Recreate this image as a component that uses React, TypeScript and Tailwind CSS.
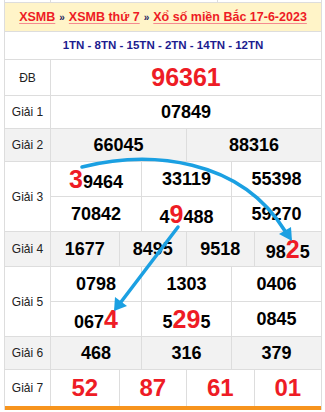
import React from 'react';

const RED = 'text-[#ee1c25]';

type Part = string | { hi: string };

const Num: React.FC<{ parts: Part[] }> = ({ parts }) => (
    <span className="font-bold text-[18px] text-black leading-none">
        {parts.map((p, i) =>
            typeof p === 'string' ? (
                <span key={i}>{p}</span>
            ) : (
                <span key={i} className={`text-[25px] ${RED}`}>{p.hi}</span>
            )
        )}
    </span>
);

const Row: React.FC<{ label: string; gray?: boolean; children: React.ReactNode }> = ({ label, gray, children }) => (
    <div className={`flex border-b border-[#ddd] ${gray ? 'bg-[#f2f2f2]' : 'bg-white'}`}>
        <div className="w-[46px] shrink-0 border-r border-[#ddd] flex items-center justify-center text-[12px] text-[#222]">
            {label}
        </div>
        <div className="flex-1 flex flex-col">{children}</div>
    </div>
);

const Cells: React.FC<{ cols: 1 | 2 | 3 | 4; items: Part[][]; h: string; last?: boolean }> = ({ cols, items, h, last = true }) => {
    const grid = cols === 1 ? 'grid-cols-1' : cols === 2 ? 'grid-cols-2' : cols === 3 ? 'grid-cols-3' : 'grid-cols-4';
    return (
        <div className={`grid ${grid} ${h} ${last ? '' : 'border-b border-[#ddd]'}`}>
            {items.map((parts, i) => (
                <div key={i} className={`flex items-center justify-center ${i > 0 ? 'border-l border-[#ddd]' : ''}`}>
                    <Num parts={parts} />
                </div>
            ))}
        </div>
    );
};

const RedCells: React.FC<{ items: string[] }> = ({ items }) => (
    <div className="grid grid-cols-4 h-[36px]">
        {items.map((n, i) => (
            <div key={i} className={`flex items-center justify-center font-bold text-[24px] ${RED} ${i > 0 ? 'border-l border-[#ddd]' : ''}`}>
                {n}
            </div>
        ))}
    </div>
);

export default function App() {
    return (
        <div className="relative w-[325px] h-[412px] bg-white overflow-hidden" style={{ fontFamily: '"Liberation Sans", Arial, sans-serif' }}>
            <div className="ml-[4px] w-[318px] border-x border-[#ddd]">
                {/* tail of the previous table */}
                <div className="flex h-[3px] border-b border-[#ddd]">
                    <div className="w-[46px] border-r border-[#ddd]" />
                    <div className="w-[167px] border-r border-[#ddd]" />
                </div>

                {/* breadcrumb */}
                <div className="h-[29px] bg-[#fff4c8] flex items-center justify-center text-[12.5px] font-bold whitespace-nowrap border-b border-[#ddd]">
                    <span className={`${RED} underline decoration-[#f58a8f] underline-offset-2`}>XSMB</span>
                    <span className="text-[#1b1b5e] text-[10px] mx-[4px]">»</span>
                    <span className={`${RED} underline decoration-[#f58a8f] underline-offset-2`}>XSMB thứ 7</span>
                    <span className="text-[#1b1b5e] text-[10px] mx-[4px]">»</span>
                    <span className={`${RED} underline decoration-[#f58a8f] underline-offset-2`}>Xổ số miền Bắc 17-6-2023</span>
                </div>

                {/* codes */}
                <div className="h-[28px] flex items-center justify-center text-[11.5px] font-bold text-[#1c1c8f] border-b border-[#ddd]">
                    1TN - 8TN - 15TN - 2TN - 14TN - 12TN
                </div>

                <Row label="ĐB">
                    <div className={`h-[35px] flex items-center justify-center font-bold text-[25px] ${RED}`}>96361</div>
                </Row>
                <Row label="Giải 1">
                    <Cells cols={1} h="h-[32px]" items={[['07849']]} />
                </Row>
                <Row label="Giải 2" gray>
                    <Cells cols={2} h="h-[32px]" items={[['66045'], ['88316']]} />
                </Row>
                <Row label="Giải 3">
                    <Cells cols={3} h="h-[35px]" last={false} items={[[{ hi: '3' }, '9464'], ['33119'], ['55398']]} />
                    <Cells cols={3} h="h-[34px]" items={[['70842'], ['4', { hi: '9' }, '488'], ['59270']]} />
                </Row>
                <Row label="Giải 4" gray>
                    <Cells cols={4} h="h-[34px]" items={[['1677'], ['8495'], ['9518'], ['98', { hi: '2' }, '5']]} />
                </Row>
                <Row label="Giải 5">
                    <Cells cols={3} h="h-[35px]" last={false} items={[['0798'], ['1303'], ['0406']]} />
                    <Cells cols={3} h="h-[34px]" items={[['067', { hi: '4' }], ['5', { hi: '29' }, '5'], ['0845']]} />
                </Row>
                <Row label="Giải 6" gray>
                    <Cells cols={3} h="h-[32px]" items={[['468'], ['316'], ['379']]} />
                </Row>
                <div className="flex bg-white">
                    <div className="w-[46px] shrink-0 border-r border-[#ddd] flex items-center justify-center text-[12px] text-[#222]">
                        Giải 7
                    </div>
                    <div className="flex-1">
                        <RedCells items={['52', '87', '61', '01']} />
                    </div>
                </div>
                <div className="h-[4px] bg-[#f7941d]" />
            </div>

            {/* hand-drawn arrows */}
            <svg className="absolute inset-0 pointer-events-none" width="325" height="412" viewBox="0 0 325 412">
                <path d="M82 167 C150 150 240 158 285 231" fill="none" stroke="#1ba0e2" strokeWidth="3.5" strokeLinecap="round" />
                <polygon points="292,241 279,234 291,227" fill="#1ba0e2" />
                <path d="M178 227 L121 302" fill="none" stroke="#1ba0e2" strokeWidth="3.5" strokeLinecap="round" />
                <polygon points="114,311 115,297 127,306" fill="#1ba0e2" />
            </svg>
        </div>
    );
}
